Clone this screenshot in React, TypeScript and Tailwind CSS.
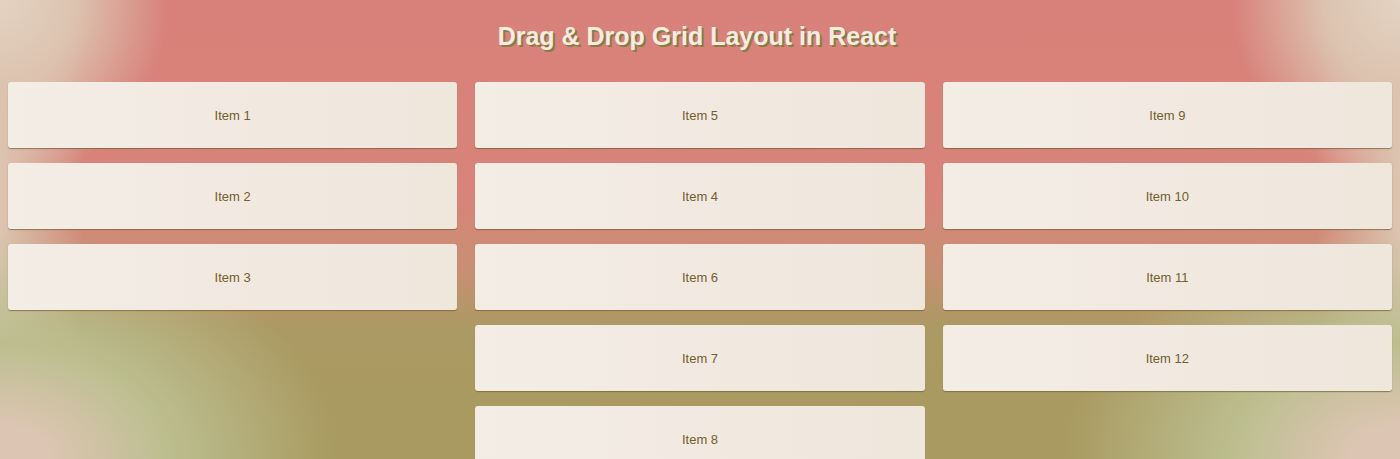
const columns: string[][] = [
  ["Item 1", "Item 2", "Item 3"],
  ["Item 5", "Item 4", "Item 6", "Item 7", "Item 8"],
  ["Item 9", "Item 10", "Item 11", "Item 12"],
];

function GridItem({ label }: { label: string }) {
  return (
    <div className="h-[66px] pt-[2px] flex items-center justify-center rounded-[3px] bg-[linear-gradient(90deg,#f4ede6,#efe6dc)] shadow-[0_1px_1px_rgba(110,95,45,0.7)] cursor-grab select-none">
      <span className="text-[13px] text-[#735e2c]">{label}</span>
    </div>
  );
}

export default function App() {
  return (
    <div className="min-h-[459px] h-[459px] overflow-hidden font-['Liberation_Sans',Arial,sans-serif] bg-[radial-gradient(ellipse_12%_40%_at_0%_0%,#e4d3c2_0%,#dcc3b0_45%,transparent_100%),radial-gradient(ellipse_12%_40%_at_100%_0%,#e4d3c2_0%,#dcc3b0_45%,transparent_100%),radial-gradient(ellipse_24%_50%_at_0%_100%,#dcc5b2_0%,#dcc5b2_15%,#bcbe8f_50%,transparent_100%),radial-gradient(ellipse_24%_50%_at_100%_100%,#dcc5b2_0%,#dcc5b2_15%,#bcbe8f_50%,transparent_100%),linear-gradient(90deg,#dcc5b2_0%,transparent_6%,transparent_94%,#dcc5b2_100%),linear-gradient(180deg,#d8817a_0%,#d8847a_42%,#c98f74_58%,#ab9a63_72%,#a89a60_100%)]">
      <h1 className="pt-5 pb-[30px] pr-[6px] text-center text-[25px] leading-8 font-bold text-[#f4ece0] [text-shadow:2px_2px_0_#8a7b45]">
        Drag &amp; Drop Grid Layout in React
      </h1>
      <div className="grid grid-cols-3 gap-[18px] px-2 items-start">
        {columns.map((col, i) => (
          <div key={i} className="flex flex-col gap-[15px]">
            {col.map((label) => (
              <GridItem key={label} label={label} />
            ))}
          </div>
        ))}
      </div>
    </div>
  );
}
